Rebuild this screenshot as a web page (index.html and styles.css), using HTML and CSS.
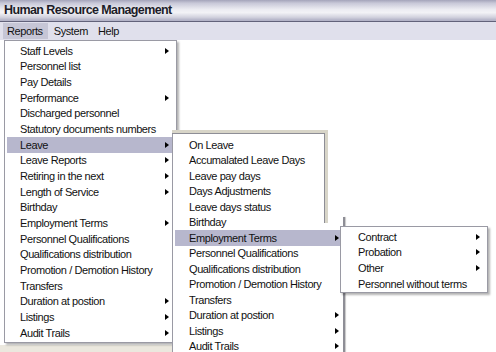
FILE: index.html
```html
<!DOCTYPE html>
<html lang="en">
<head>
    <meta charset="UTF-8">
    <title>Human Resource Management</title>
    <link rel="stylesheet" href="styles.css">
</head>
<body>
    <div id="app">
        <div id="titlebar">Human Resource Management</div>
        <ul id="menubar">
            <li class="open">Reports</li>
            <li>System</li>
            <li>Help</li>
        </ul>
        <div id="client">
            <div class="fill"></div>
            <div class="status"></div>
        </div>

        <!-- Reports -->
        <ul class="menu" id="menu-reports">
            <li class="sub">Staff Levels</li>
            <li>Personnel list</li>
            <li>Pay Details</li>
            <li class="sub">Performance</li>
            <li>Discharged personnel</li>
            <li>Statutory documents numbers</li>
            <li class="sub active">Leave</li>
            <li class="sub">Leave Reports</li>
            <li class="sub">Retiring in the next</li>
            <li class="sub">Length of Service</li>
            <li>Birthday</li>
            <li class="sub">Employment Terms</li>
            <li>Personnel Qualifications</li>
            <li>Qualifications distribution</li>
            <li>Promotion / Demotion History</li>
            <li>Transfers</li>
            <li class="sub">Duration at postion</li>
            <li class="sub">Listings</li>
            <li class="sub">Audit Trails</li>
        </ul>

        <!-- Reports > Leave -->
        <ul class="menu" id="menu-leave">
            <li>On Leave</li>
            <li>Accumalated Leave Days</li>
            <li>Leave pay days</li>
            <li>Days Adjustments</li>
            <li>Leave days status</li>
            <li>Birthday</li>
            <li class="sub active">Employment Terms</li>
            <li>Personnel Qualifications</li>
            <li>Qualifications distribution</li>
            <li>Promotion / Demotion History</li>
            <li>Transfers</li>
            <li class="sub">Duration at postion</li>
            <li class="sub">Listings</li>
            <li class="sub">Audit Trails</li>
        </ul>

        <!-- Employment Terms -->
        <ul class="menu" id="menu-terms">
            <li class="sub">Contract</li>
            <li class="sub">Probation</li>
            <li class="sub">Other</li>
            <li>Personnel without terms</li>
        </ul>
    </div>
</body>
</html>
```

FILE: styles.css
```css
* {
    margin: 0;
    padding: 0;
    box-sizing: border-box;
}
ul {
    list-style: none;
}
body {
    width: 496px;
    height: 352px;
    overflow: hidden;
    background: #fff;
    font-family: "Liberation Sans", Arial, sans-serif;
    font-size: 11px;
    letter-spacing: -0.4px;
    color: #111;
}
#app {
    position: relative;
    width: 496px;
    height: 352px;
    display: flex;
    flex-direction: column;
}
#titlebar {
    height: 22px;
    line-height: 21px;
    padding-left: 4px;
    font-size: 12.5px;
    font-weight: bold;
    letter-spacing: -0.6px;
    color: #1c1c28;
    background: linear-gradient(#a4a4ba 0, #c8c8d8 15%, #ececf2 45%, #f2f2f6 60%, #d2d2de 82%, #b4b4c8 95%);
    border-bottom: 1px solid #62627a;
}
#menubar {
    height: 18px;
    display: flex;
    align-items: center;
    padding-left: 3px;
    background: #e0e0ec;
}
#menubar li {
    height: 16px;
    line-height: 16px;
    padding: 0 4px;
    margin-right: 2px;
}
#menubar .open {
    background: #c6c6d6;
    padding-right: 5px;
}
#client {
    flex: 1;
    display: flex;
    flex-direction: column;
}
#client .fill {
    flex: 1;
}
#client .status {
    height: 7px;
    width: 176px;
    background: #ebe8de;
}

/* popup menus */
.menu {
    position: absolute;
    background: #fff;
    border: 1px solid #9a9aa4;
    box-shadow: 2px 2px 2px rgba(0, 0, 0, 0.3);
}
.menu li {
    display: flex;
    align-items: center;
    justify-content: space-between;
    margin: 0 2px;
    white-space: nowrap;
}
.menu li.active {
    background: #b7b7cd;
}
.menu li.sub::after {
    content: "";
    border-left: 4px solid #000;
    border-top: 3.5px solid transparent;
    border-bottom: 3.5px solid transparent;
}
#menu-reports {
    left: 4px;
    top: 40px;
    width: 173px;
    padding: 2px 0;
    z-index: 1;
}
#menu-reports li {
    height: 15.67px;
    padding: 0 5px 0 13px;
}
#menu-leave {
    left: 172px;
    top: 134px;
    width: 173px;
    height: 230px;
    padding-top: 3px;
    border-top: none;
    border-right: none;
    box-shadow: none;
    z-index: 2;
}
#menu-leave::before {
    content: "";
    position: absolute;
    left: -1px;
    top: -4px;
    width: 153px;
    height: 90px;
    border-top: 3px solid #d8d5c8;
    border-right: 3px solid #d8d5c8;
    box-shadow: inset -1px 1px 0 #8e8e96;
}
#menu-leave::after {
    content: "";
    position: absolute;
    right: 0;
    top: 83px;
    bottom: 0;
    width: 2px;
    background: #8e8e96;
    box-shadow: 1px 0 1px #c8c8c8;
}
#menu-leave li {
    height: 15.5px;
    padding: 0 4px 0 14px;
}
#menu-terms {
    left: 340px;
    top: 226px;
    width: 148px;
    padding: 2px 0 1px;
    z-index: 3;
}
#menu-terms li {
    height: 15.6px;
    padding: 0 5px 0 15px;
}
```
